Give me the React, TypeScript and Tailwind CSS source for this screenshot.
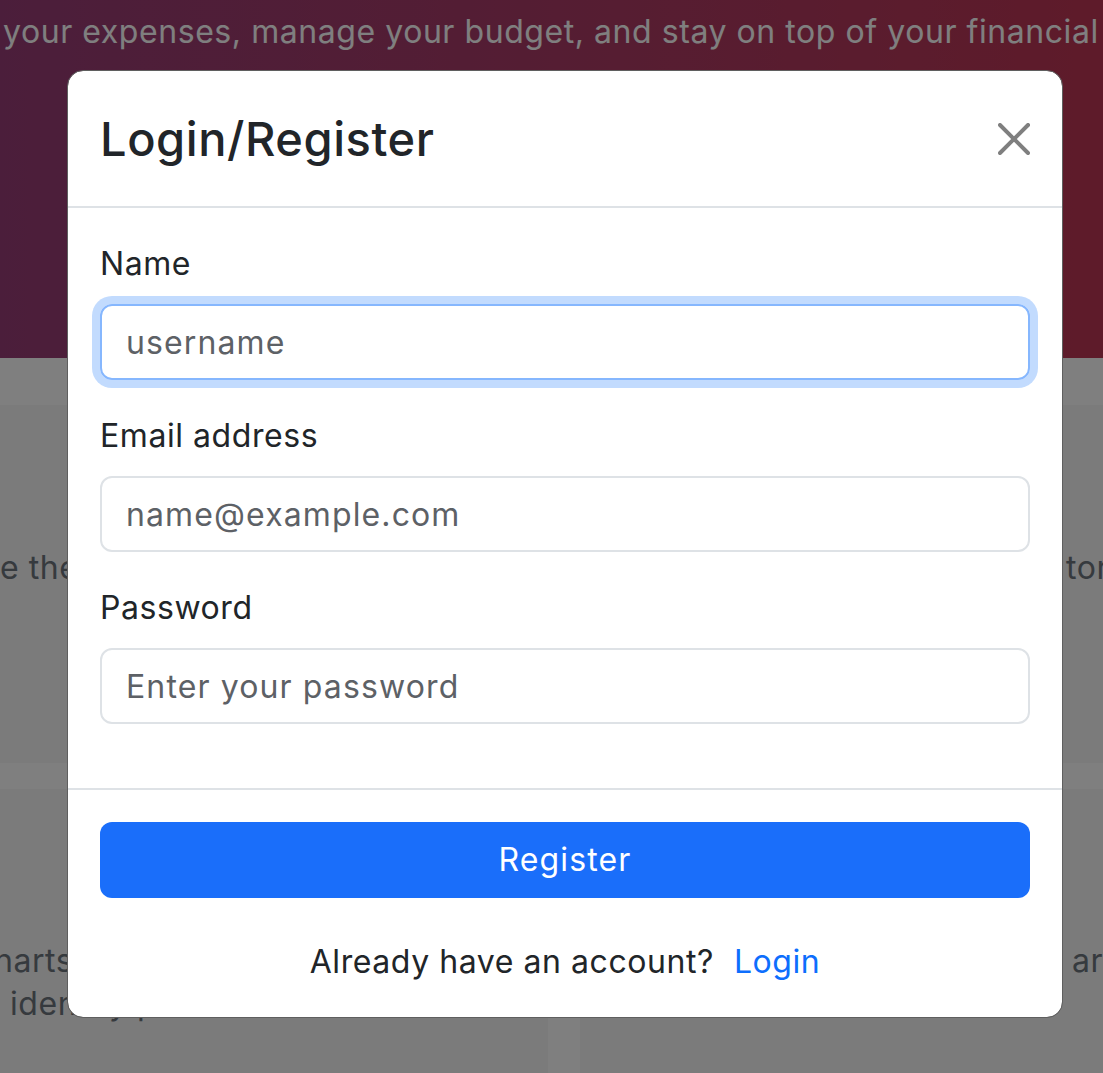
import React from 'react';

const CloseIcon = () => (
    <svg viewBox="0 0 16 16" className="w-[32px] h-[32px]" fill="#000" fillOpacity={0.5}>
        <path d="M.293.293a1 1 0 0 1 1.414 0L8 6.586 14.293.293a1 1 0 1 1 1.414 1.414L9.414 8l6.293 6.293a1 1 0 0 1-1.414 1.414L8 9.414l-6.293 6.293a1 1 0 0 1-1.414-1.414L6.586 8 .293 1.707a1 1 0 0 1 0-1.414z" />
    </svg>
);

const fields = [
    { id: 'name', label: 'Name', placeholder: 'username', type: 'text', focused: true },
    { id: 'email', label: 'Email address', placeholder: 'name@example.com', type: 'email', focused: false },
    { id: 'password', label: 'Password', placeholder: 'Enter your password', type: 'password', focused: false },
];

export default function App() {
    return (
        <div className="relative h-[1073px] w-full overflow-hidden bg-white font-['Inter',sans-serif] tracking-[0.035em] text-[#212529]">
            {/* Hero */}
            <div className="h-[358px] bg-gradient-to-r from-[#973c76] to-[#bd3654] overflow-hidden">
                <p className="pt-[8px] pl-[3px] whitespace-nowrap text-[32px] leading-[48px] text-white">
                    your expenses, manage your budget, and stay on top of your financial goals.
                </p>
            </div>

            {/* Feature cards */}
            <div className="grid grid-cols-[548px_1fr] gap-x-[32px] gap-y-[26px] pt-[47px] text-[#6c757d] text-[32px]">
                <div className="h-[358px] bg-[#f6f6f6] pt-[139px] overflow-hidden">
                    <p className="whitespace-nowrap leading-[48px]">e the breakdown of your spending</p>
                </div>
                <div className="h-[358px] bg-[#f6f6f6] pt-[139px] pl-[486px] overflow-hidden">
                    <p className="whitespace-nowrap leading-[48px]">tor</p>
                </div>
                <div className="h-[320px] bg-[#f6f6f6] pt-[150px] overflow-hidden">
                    <p className="whitespace-nowrap leading-[43px] -ml-[6px]">harts and graphs to help you</p>
                    <p className="whitespace-nowrap leading-[43px] pl-[10px]">identify patterns</p>
                </div>
                <div className="h-[320px] bg-[#f6f6f6] pt-[150px] pl-[492px] overflow-hidden">
                    <p className="whitespace-nowrap leading-[43px]">ar</p>
                </div>
            </div>

            {/* Backdrop */}
            <div className="absolute inset-0 bg-black/50" />

            {/* Modal */}
            <div className="absolute left-[67px] top-[70px] w-[996px] h-[948px] flex flex-col rounded-[16px] border border-[#5f5f5f] bg-white bg-clip-padding">
                <div className="h-[137px] flex items-center justify-between px-[32px] border-b-2 border-[#dee2e6]">
                    <h3 className="text-[47px] leading-[70px] font-[450] text-[#212529]">Login/Register</h3>
                    <button type="button" aria-label="Close" className="flex items-center justify-center">
                        <CloseIcon />
                    </button>
                </div>

                <div className="px-[32px] pt-[32px] pb-[64px]">
                    {fields.map((f, i) => (
                        <div key={f.id} className={i < fields.length - 1 ? 'mb-[32px]' : ''}>
                            <label htmlFor={f.id} className="block text-[32px] leading-[48px] mb-[16px]">
                                {f.label}
                            </label>
                            <input
                                id={f.id}
                                type={f.type}
                                placeholder={f.placeholder}
                                className={`block w-full h-[76px] rounded-[12px] border-2 px-[24px] text-[32px] tracking-[0.035em] outline-none placeholder:text-[#5d6166] ${
                                    f.focused
                                        ? 'border-[#86b7fe] shadow-[0_0_0_8px_rgba(13,110,253,0.25)]'
                                        : 'border-[#dee2e6]'
                                }`}
                            />
                        </div>
                    ))}
                </div>

                <div className="border-t-2 border-[#dee2e6] px-[32px] pt-[32px] pb-[31px]">
                    <button type="button" className="w-full h-[76px] rounded-[12px] bg-[#1a6efa] text-white text-[32px] tracking-[0.035em]">
                        Register
                    </button>
                    <p className="mt-[40px] text-center text-[32px] leading-[48px]">
                        Already have an account?
                        <a href="#" className="ml-[20px] text-[#0d6efd]">Login</a>
                    </p>
                </div>
            </div>
        </div>
    );
}
